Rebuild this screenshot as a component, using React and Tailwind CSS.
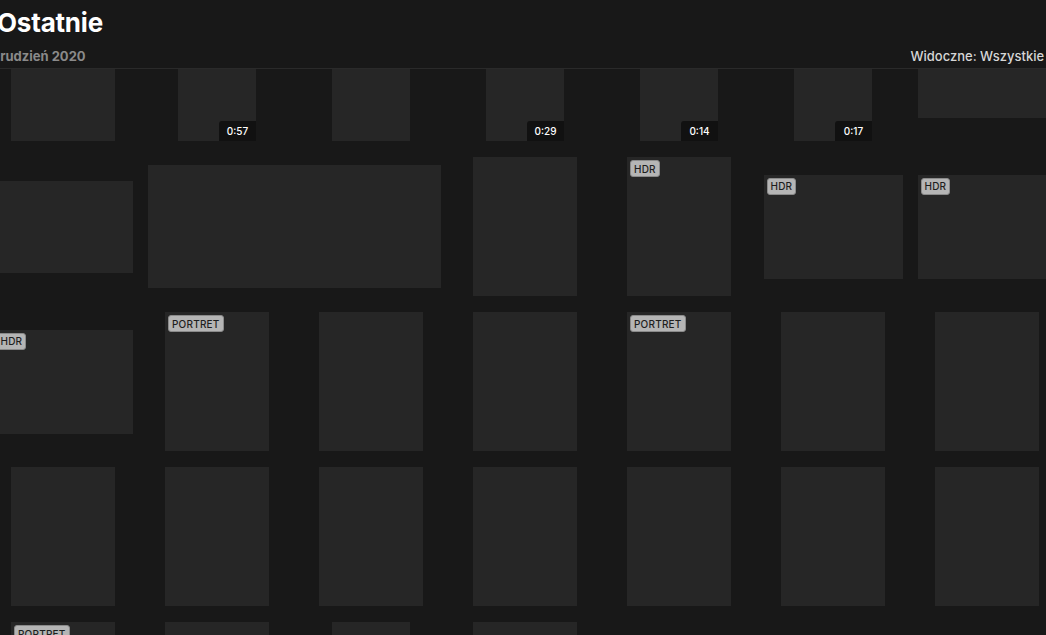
import React from "react";

const P = { w: 104, h: 139 };
const V = { w: 78, h: 139 };

const rows = [
  [
    { ...P },
    { ...V, dur: "0:57" },
    { ...V },
    { ...V, dur: "0:29" },
    { ...V, dur: "0:14" },
    { ...V, dur: "0:17" },
    { w: 139, h: 93 },
  ],
  [
    { w: 139, h: 92 },
    { w: 293, h: 123, span: 2 },
    { ...P },
    { ...P, badge: "HDR" },
    { w: 139, h: 104, badge: "HDR" },
    { w: 139, h: 104, badge: "HDR" },
  ],
  [
    { w: 139, h: 104, badge: "HDR" },
    { ...P, badge: "PORTRET" },
    { ...P },
    { ...P },
    { ...P, badge: "PORTRET" },
    { ...P },
    { ...P },
  ],
  [{ ...P }, { ...P }, { ...P }, { ...P }, { ...P }, { ...P }, { ...P }],
  [{ ...P, badge: "PORTRET" }, { ...P }, { ...V }, { ...P }],
];

function Tile({ item }) {
  return (
    <div
      className={`${item.span === 2 ? "col-span-2" : ""} h-[155px] flex items-center justify-center`}
    >
      <div
        className="relative bg-[#262626] shrink-0"
        style={{ width: item.w, height: item.h }}
      >
        {item.badge && (
          <span className="absolute left-[3px] top-[3px] h-[17px] px-[3px] flex items-center rounded-[3px] bg-[#b5b5b5] border border-[#8a8a8a] text-[10px] leading-none font-medium text-[#1e1e1e] tracking-[0.2px]">
            {item.badge}
          </span>
        )}
        {item.dur && (
          <span className="absolute right-0 bottom-0 w-[37px] h-[20px] flex items-center justify-center rounded-tl-[3px] bg-[#111111] text-[10px] leading-none font-medium text-white">
            {item.dur}
          </span>
        )}
      </div>
    </div>
  );
}

export default function App() {
  return (
    <div
      className="w-[1046px] h-[635px] overflow-hidden bg-[#181818] flex flex-col"
      style={{ fontFamily: "Inter, 'Noto Sans', sans-serif" }}
    >
      <header className="h-[69px] shrink-0 border-b border-[#2a2a2a] flex flex-col -ml-[3px]">
        <h1 className="text-[26px] leading-none font-bold text-white tracking-[-0.2px] mt-[10px]">
          Ostatnie
        </h1>
        <div className="flex items-center justify-between mt-[11px]">
          <span className="text-[13px] font-bold text-[#8a8a8a] -ml-[5px]">grudzień 2020</span>
          <span className="text-[13px] font-medium text-[#d6d6d6] whitespace-nowrap -mr-[29px]">
            Widoczne: Wszystkie typy
          </span>
        </div>
      </header>
      <main className="flex-1 overflow-hidden">
        <div className="-mt-[75px] -ml-[14px] flex flex-col">
          {rows.map((row, r) => (
            <div key={r} className="grid grid-cols-[repeat(7,154px)]">
              {row.map((item, i) => (
                <Tile key={i} item={item} />
              ))}
            </div>
          ))}
        </div>
      </main>
    </div>
  );
}
